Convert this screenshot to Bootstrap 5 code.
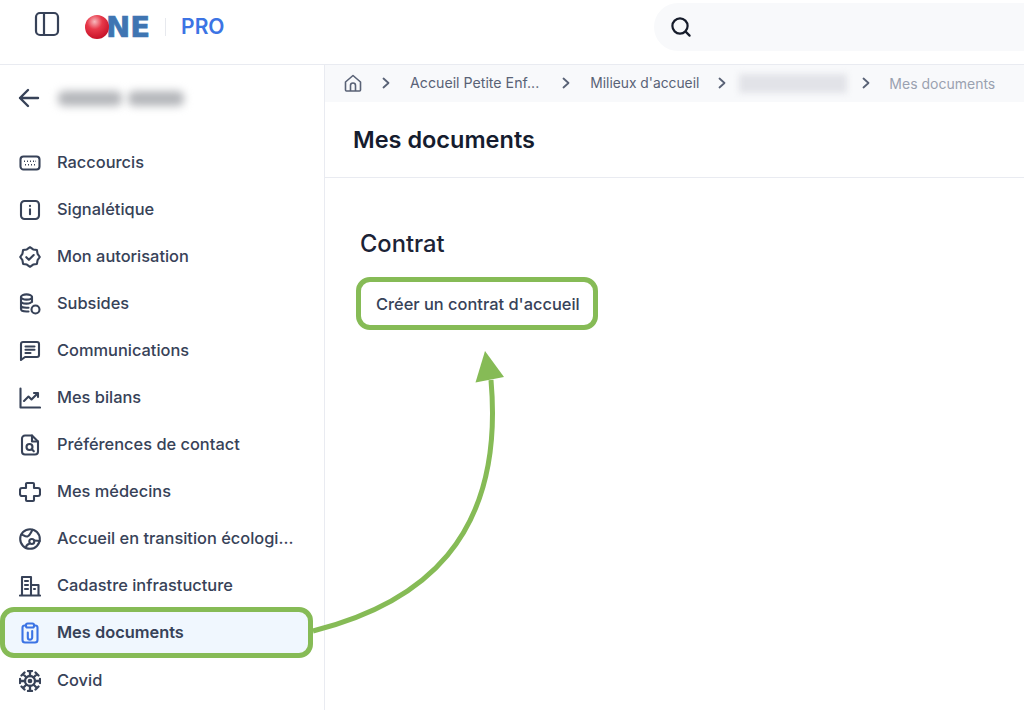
<!DOCTYPE html>
<html lang="fr">
<head>
    <meta charset="UTF-8">
    <meta name="viewport" content="width=device-width, initial-scale=1">
    <title>Mes documents</title>
    <link href="https://cdn.jsdelivr.net/npm/bootstrap@5.3.0/dist/css/bootstrap.min.css" rel="stylesheet">
    <style>
        body {
            font-family: "Inter", "Liberation Sans", sans-serif;
            color: #374258;
            background: #fff;
            height: 710px;
            overflow: hidden;
        }
        .top-bar { height: 65px; border-bottom: 1px solid #e9ebf1; }
        .panel-toggle { margin: 11px 0 0 34px; }
        .logo-box { margin: 15px 0 0 25px; }
        .logo-ball {
            width: 24px; height: 24px; border-radius: 50%; position: relative; z-index: 1;
            background: radial-gradient(circle at 40% 28%, #f7b9bd 0, #e8394a 34%, #c9142a 75%, #a80f22 100%);
        }
        .logo-ne {
            font-family: "DejaVu Sans", sans-serif;
            font-size: 29px; font-weight: 700; line-height: 24px; color: #3f75b2;
            margin-left: -3px; -webkit-text-stroke: .7px #3f75b2;
        }
        .logo-sep { width: 1px; height: 18px; background: #e7e9ee; margin: 0 15px 0 15px; }
        .logo-pro { font-size: 21px; font-weight: 600; color: #3c74e4; line-height: 24px; }
        .search-box {
            margin: 3px 0 0 auto; width: 370px; height: 48px;
            background: #f8f9fb; border-radius: 24px 0 0 24px; padding-left: 15px;
        }
        .side-col { width: 325px; flex: none; border-right: 1px solid #e9ebf1; height: 645px; overflow: hidden; }
        .side-head { height: 66px; padding-left: 18px; }
        .blur-name { height: 15px; background: #b4b6ba; border-radius: 6px; filter: blur(4px); }
        .blur-first { width: 64px; margin-left: 18px; }
        .blur-second { width: 56px; margin-left: 6px; }
        .side-list { padding-top: 8px; }
        .side-item { height: 47px; padding-left: 19px; font-size: 16.4px; font-weight: 500; white-space: nowrap; }
        .side-item svg { margin-right: 16px; flex: none; }
        .side-active {
            height: 41px; margin: 3px 16px 4px 5px; padding-left: 14px; font-weight: 600;
            background: #f0f7fe; border-radius: 9px; outline: 5px solid #86bb56; outline-offset: 0;
        }
        .crumbs { height: 37px; background: #f8f9fb; padding: 0 0 1px 19px; font-size: 14px; color: #596276; white-space: nowrap; }
        .crumb-arrow { margin: 0 20px; flex: none; }
        .crumb-one { font-size: 14.2px; margin-right: 3px; }
        .crumb-two { font-size: 13.8px; margin-right: -1px; padding-top: 1px; }
        .crumb-arrow-tight { margin-right: 13px; }
        .blur-crumb { width: 108px; height: 19px; background: #e2e3e8; filter: blur(3px); margin-right: -5px; }
        .crumb-last { color: #9aa1b0; margin-left: -1px; }
        .page-head { height: 76px; border-bottom: 1px solid #e9ebf1; padding: 1px 0 0 28px; }
        .page-head h1 { font-size: 23.5px; font-weight: 600; color: #151c2e; margin: 0; }
        .page-body { padding: 51px 0 0 35px; }
        .page-body h2 { font-size: 23.7px; font-weight: 500; color: #1c2336; margin: 0 0 23px; line-height: 30px; }
        .contract-btn {
            display: inline-block; height: 43px; line-height: 45px; padding: 0 13px 0 15px; margin-left: 1px;
            border-radius: 9px; outline: 5px solid #86bb56; font-size: 16.4px; font-weight: 500; color: #374258;
        }
        .arrow-layer { position: absolute; left: 0; top: 0; width: 1024px; height: 710px; pointer-events: none; }
    </style>
</head>
<body class="position-relative">
    <!-- Barre du haut -->
    <div class="top-bar d-flex align-items-start">
        <svg class="panel-toggle" width="26" height="26" viewBox="0 0 26 26" fill="none" stroke="#374258" stroke-width="2.2"><rect x="2" y="2" width="22" height="22" rx="4"/><path d="M10 2v22"/></svg>
        <div class="logo-box d-flex align-items-center">
            <div class="logo-ball"></div>
            <div class="logo-ne">NE</div>
            <div class="logo-sep"></div>
            <div class="logo-pro">PRO</div>
        </div>
        <div class="search-box d-flex align-items-center">
            <svg width="24" height="24" viewBox="0 0 24 24" fill="none" stroke="#161c2b" stroke-width="2.2" stroke-linecap="round"><circle cx="11" cy="11" r="7.600"/><path d="M16.600 16.600l4 4"/></svg>
        </div>
    </div>

    <div class="d-flex">
        <!-- Menu lateral -->
        <div class="side-col">
            <div class="side-head d-flex align-items-center">
                <svg width="22" height="22" viewBox="0 0 22 22" fill="none" stroke="#374258" stroke-width="2.400" stroke-linecap="round" stroke-linejoin="round"><path d="M20 11H2M10 3l-8 8 8 8"/></svg>
                <div class="blur-name blur-first"></div>
                <div class="blur-name blur-second"></div>
            </div>
            <div class="side-list">
                <div class="side-item d-flex align-items-center">
                    <svg width="22" height="22" viewBox="0 0 22 22" fill="none" stroke="#374258" stroke-width="2.100"><rect x="1.500" y="4.500" width="19" height="13" rx="3"/><path d="M5 9.300h1M8 9.300h1M11 9.300h1M14 9.300h1M16.500 9.300h.5M6 12.800h1M9 12.800h1M12 12.800h1M15 12.800h1" stroke-width="1.500"/></svg>
                    Raccourcis
                </div>
                <div class="side-item d-flex align-items-center">
                    <svg width="22" height="22" viewBox="0 0 22 22" fill="none" stroke="#374258" stroke-width="2.100" stroke-linecap="round"><rect x="2" y="2" width="18" height="18" rx="3.500"/><path d="M11 10.300v5M11 6.800v.3"/></svg>
                    Signalétique
                </div>
                <div class="side-item d-flex align-items-center">
                    <svg width="22" height="22" viewBox="0 0 22 22" fill="none" stroke="#374258" stroke-width="2.100" stroke-linecap="round" stroke-linejoin="round"><path d="M11 1.200L14.140 3.420 17.930 4.070 18.580 7.860 20.800 11 18.580 14.140 17.930 17.930 14.140 18.580 11 20.800 7.860 18.580 4.070 17.930 3.420 14.140 1.200 11 3.420 7.860 4.070 4.070 7.860 3.420z"/><path d="M7.300 11.200l2.600 2.600 4.800-4.800"/></svg>
                    Mon autorisation
                </div>
                <div class="side-item d-flex align-items-center">
                    <svg width="22" height="22" viewBox="0 0 22 22" fill="none" stroke="#374258" stroke-width="2.100" stroke-linecap="round"><ellipse cx="7.500" cy="4" rx="5.500" ry="2.600"/><path d="M2 4v12c0 1.400 2.400 2.500 5.500 2.500h2M13 4v5M2 8c0 1.400 2.400 2.600 5.500 2.600S13 9.400 13 8M2 12.300c0 1.400 2.400 2.500 5.500 2.500h2"/><circle cx="16.500" cy="16.500" r="4"/></svg>
                    Subsides
                </div>
                <div class="side-item d-flex align-items-center">
                    <svg width="22" height="22" viewBox="0 0 22 22" fill="none" stroke="#374258" stroke-width="2.100" stroke-linecap="round" stroke-linejoin="round"><path d="M2 20V4a2 2 0 0 1 2-2h14a2 2 0 0 1 2 2v11a2 2 0 0 1-2 2H6z"/><path d="M6.500 6.500h9M6.500 9.800h9M6.500 13h5"/></svg>
                    Communications
                </div>
                <div class="side-item d-flex align-items-center">
                    <svg width="22" height="22" viewBox="0 0 22 22" fill="none" stroke="#374258" stroke-width="2.100" stroke-linecap="round" stroke-linejoin="round"><path d="M1.500 1.500V20.500H21"/><path d="M5 14l4.500-4.500 3 3L19 6M15 6h4v4"/></svg>
                    Mes bilans
                </div>
                <div class="side-item d-flex align-items-center">
                    <svg width="22" height="22" viewBox="0 0 22 22" fill="none" stroke="#374258" stroke-width="2.100" stroke-linecap="round" stroke-linejoin="round"><path d="M13 1.500H6a3 3 0 0 0-3 3v13a3 3 0 0 0 3 3h10a3 3 0 0 0 3-3V7.500z"/><path d="M13 1.500v6h6"/><circle cx="10.500" cy="13" r="3"/><path d="M12.800 15.300l2 2"/></svg>
                    Préférences de contact
                </div>
                <div class="side-item d-flex align-items-center">
                    <svg width="22" height="22" viewBox="0 0 22 22" fill="none" stroke="#374258" stroke-width="2.100" stroke-linejoin="round"><path d="M8 2h6a1 1 0 0 1 1 1v4h4a2 2 0 0 1 2 2v4a2 2 0 0 1-2 2h-4v4a1 1 0 0 1-1 1H8a1 1 0 0 1-1-1v-4H3a2 2 0 0 1-2-2V9a2 2 0 0 1 2-2h4V3a1 1 0 0 1 1-1z"/></svg>
                    Mes médecins
                </div>
                <div class="side-item d-flex align-items-center">
                    <svg width="22" height="22" viewBox="0 0 22 22" fill="none" stroke="#374258" stroke-width="2.100" stroke-linecap="round" stroke-linejoin="round"><circle cx="11" cy="11" r="9.800"/><path d="M2.500 6.500c2 .5 3.500 2.500 6 2 2.500-.5 3-3.500 5-6.700"/><circle cx="12.800" cy="13.500" r="2.500"/><path d="M15.300 12.500c2 0 4 .5 5.500 .5M7 20c0-2 .5-3.500 3-4"/></svg>
                    Accueil en transition écologi...
                </div>
                <div class="side-item d-flex align-items-center">
                    <svg width="22" height="22" viewBox="0 0 22 22" fill="none" stroke="#374258" stroke-width="2.100" stroke-linecap="round" stroke-linejoin="round"><path d="M1 20.500h20M3 20.500V2h9v18.500M12 10h7.500v10.500M6 6h3M6 10h3M6 14h3M15 14h1"/></svg>
                    Cadastre infrastucture
                </div>
                <div class="side-item side-active d-flex align-items-center">
                    <svg width="22" height="22" viewBox="0 0 22 22" fill="none" stroke="#3c74e4" stroke-width="2.100" stroke-linecap="round" stroke-linejoin="round"><path d="M7 3.500H5.500a2 2 0 0 0-2 2V18a2.500 2.500 0 0 0 2.500 2.500h10a2.500 2.500 0 0 0 2.500-2.500V5.500a2 2 0 0 0-2-2H15"/><rect x="7" y="1.500" width="8" height="4" rx="1.500"/><path d="M13.200 9v6.500a2.200 2.200 0 0 1-4.400 0V10.500"/></svg>
                    Mes documents
                </div>
                <div class="side-item d-flex align-items-center">
                    <svg width="22" height="22" viewBox="0 0 22 22" fill="none" stroke="#374258" stroke-width="2.300" stroke-linecap="round"><circle cx="11" cy="11" r="5"/><circle cx="11" cy="11" r="1.200"/><path d="M11 1v5M11 16v5M1 11h5M16 11h5M4 4l3.500 3.500M14.500 14.500L18 18M18 4l-3.500 3.500M7.500 14.500L4 18M9 1h4M9 21h4M1 9v4M21 9v4M2.500 5.500l3-3M16.500 19.500l3-3M16.500 2.500l3 3M2.500 16.500l3 3"/></svg>
                    Covid
                </div>
            </div>
        </div>

        <!-- Contenu -->
        <div class="flex-grow-1">
            <div class="crumbs d-flex align-items-center">
                <svg width="18" height="18" viewBox="0 0 18 18" fill="none" stroke="#596276" stroke-width="1.600" stroke-linejoin="round"><path d="M1.500 8L9 1.500 16.500 8v8a1 1 0 0 1-1 1h-13a1 1 0 0 1-1-1z"/><path d="M6.500 17v-5.500a2.500 2.500 0 0 1 5 0V17"/></svg>
                <svg class="crumb-arrow" width="8" height="12" viewBox="0 0 8 12" fill="none" stroke="#596276" stroke-width="1.800" stroke-linecap="round" stroke-linejoin="round"><path d="M1.500 1.500L6.500 6l-5 4.500"/></svg>
                <span class="crumb-one">Accueil Petite Enf...</span>
                <svg class="crumb-arrow" width="8" height="12" viewBox="0 0 8 12" fill="none" stroke="#596276" stroke-width="1.800" stroke-linecap="round" stroke-linejoin="round"><path d="M1.500 1.500L6.500 6l-5 4.500"/></svg>
                <span class="crumb-two">Milieux d'accueil</span>
                <svg class="crumb-arrow crumb-arrow-tight" width="8" height="12" viewBox="0 0 8 12" fill="none" stroke="#596276" stroke-width="1.800" stroke-linecap="round" stroke-linejoin="round"><path d="M1.500 1.500L6.500 6l-5 4.500"/></svg>
                <div class="blur-crumb"></div>
                <svg class="crumb-arrow" width="8" height="12" viewBox="0 0 8 12" fill="none" stroke="#596276" stroke-width="1.800" stroke-linecap="round" stroke-linejoin="round"><path d="M1.500 1.500L6.500 6l-5 4.500"/></svg>
                <span class="crumb-last">Mes documents</span>
            </div>
            <div class="page-head d-flex align-items-center">
                <h1>Mes documents</h1>
            </div>
            <div class="page-body">
                <h2>Contrat</h2>
                <a class="contract-btn text-decoration-none" href="#">Créer un contrat d'accueil</a>
            </div>
        </div>
    </div>

    <!-- Fleche d'annotation -->
    <svg class="arrow-layer" viewBox="0 0 1024 710" fill="none">
        <path d="M313 631C420 604 505 540 491 380" stroke="#86bb56" stroke-width="5"/>
        <path d="M485 351L475.500 382.500 504 377z" fill="#86bb56"/>
    </svg>
    <script src="https://cdn.jsdelivr.net/npm/bootstrap@5.3.0/dist/js/bootstrap.bundle.min.js"></script>
</body>
</html>
